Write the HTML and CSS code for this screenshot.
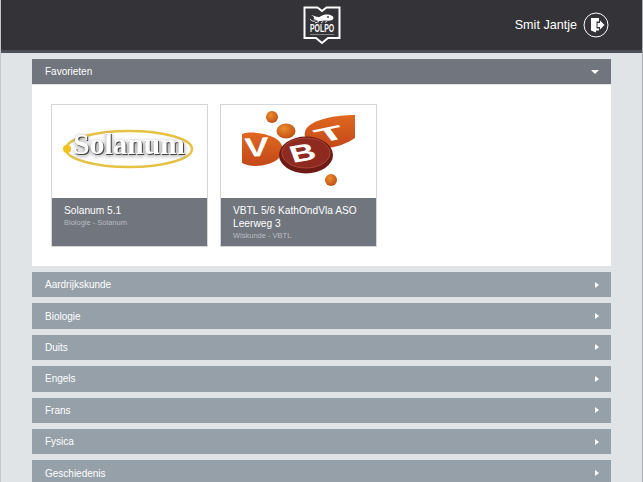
FILE: index.html
```html
<!DOCTYPE html>
<html lang="en">
<head>
    <meta charset="UTF-8">
    <meta name="viewport" content="width=device-width, initial-scale=1.0">
    <title>Polpo</title>
    <link rel="stylesheet" href="styles.css">
</head>
<body>
    <header class="topbar">
        <svg class="logo" width="38" height="38" viewBox="0 0 38 38">
            <path d="M1.5 1.5 H14.5 L19 5 L23.5 1.5 H36.5 V32 H25 L19 37 L13 32 H1.5 Z" fill="none" stroke="#fff" stroke-width="2"/>
            <path d="M8 9 C11 9.5 13 11 15.5 11 C18 11 19 8.5 23.5 8.5 C28 8.5 31 10.5 30.5 12.5 C30 14.5 26 15 23 14.5 C20 14 18.5 15.5 15.5 15 C13.5 14.7 12.5 13.5 10.5 13 C12 12 11 10.5 8 9 Z" fill="#fff"/>
            <path d="M7 13 C8.5 15.5 11 15.5 12.5 14.8 M12 17 L16 15.5 M18 17 L20.5 15 M22 16.5 L24 15" fill="none" stroke="#fff" stroke-width="0.9"/>
            <circle cx="25" cy="11" r="0.9" fill="#333338"/>
            <text class="logo-text" transform="translate(7 26) scale(0.69 1)">POLPO</text>
            <rect x="7" y="28" width="24" height="0.8" fill="#999"/>
        </svg>
        <div class="user">
            <span class="user-name">Smit Jantje</span>
            <svg class="logout" width="26" height="26" viewBox="0 0 26 26">
                <circle cx="13" cy="13" r="12" fill="none" stroke="#fff" stroke-width="1"/>
                <path d="M8 6 H16 V9.5 H13.5 V16.5 H16 V18.5 H13 V20.5 L8 18.5 Z" fill="#fff"/>
                <path d="M14.5 11 H17 V8.5 L21.5 13 L17 17.5 V15 H14.5 Z" fill="#fff"/>
            </svg>
        </div>
    </header>
    <div class="topbar-edge"></div>

    <main class="content">
        <section class="favorites">
            <div class="fav-head">
                <span>Favorieten</span>
                <span class="arrow-down"></span>
            </div>
            <div class="fav-body">
                <article class="card">
                    <div class="card-img">
                        <svg width="155" height="93" viewBox="0 0 155 93">
                            <ellipse cx="77" cy="44" rx="63" ry="18" fill="none" stroke="#e6c244" stroke-width="2.5"/>
                            <circle cx="15" cy="44" r="4" fill="#f2c21e"/>
                            <text class="solanum-text" x="77" y="49" text-anchor="middle">Solanum</text>
                        </svg>
                    </div>
                    <div class="card-info">
                        <div class="card-title">Solanum 5.1</div>
                        <div class="card-sub">Biologie - Solanum</div>
                    </div>
                </article>
                <article class="card">
                    <div class="card-img">
                        <svg width="155" height="93" viewBox="0 0 155 93">
                            <defs>
                                <linearGradient id="orange" x1="0" y1="0" x2="0" y2="1">
                                    <stop offset="0" stop-color="#e0681f"/>
                                    <stop offset="1" stop-color="#c2481a"/>
                                </linearGradient>
                                <radialGradient id="ball" cx="0.4" cy="0.35" r="0.7">
                                    <stop offset="0" stop-color="#ee8c2c"/>
                                    <stop offset="1" stop-color="#bb4d16"/>
                                </radialGradient>
                            </defs>
                            <path d="M21 29 C30 26 45 28 54 33 C63 38 64 48 57 54 C50 60 32 64 21 58 Z" fill="url(#orange)"/>
                            <path d="M134 10 C115 10 92 14 85 24 C80 34 90 43 102 43 C115 43 127 38 134 33 Z" fill="url(#orange)"/>
                            <circle cx="51" cy="12" r="6" fill="url(#ball)"/>
                            <ellipse cx="65" cy="26" rx="9.5" ry="7.5" fill="url(#ball)"/>
                            <ellipse cx="85" cy="50" rx="27" ry="18.5" fill="#6f1a14"/>
                            <ellipse cx="85" cy="48" rx="24" ry="15" fill="#8f2a20" stroke="#a9493c" stroke-width="1"/>
                            <circle cx="110" cy="75" r="6" fill="url(#ball)"/>
                            <text class="vbt-text" transform="translate(24 52) rotate(-3) scale(1.35 1)">V</text>
                            <text class="vbt-text" transform="translate(100 38) rotate(-12) skewX(25) scale(1.7 0.75)">T</text>
                            <text class="vbt-text" transform="translate(72 58) rotate(-10) skewX(10) scale(1.3 0.9)">B</text>
                        </svg>
                    </div>
                    <div class="card-info">
                        <div class="card-title">VBTL 5/6 KathOndVla ASO Leerweg 3</div>
                        <div class="card-sub">Wiskunde - VBTL</div>
                    </div>
                </article>
            </div>
        </section>

        <div class="subjects">
            <div class="subject"><span>Aardrijkskunde</span><span class="arrow-right"></span></div>
            <div class="subject"><span>Biologie</span><span class="arrow-right"></span></div>
            <div class="subject"><span>Duits</span><span class="arrow-right"></span></div>
            <div class="subject"><span>Engels</span><span class="arrow-right"></span></div>
            <div class="subject"><span>Frans</span><span class="arrow-right"></span></div>
            <div class="subject"><span>Fysica</span><span class="arrow-right"></span></div>
            <div class="subject"><span>Geschiedenis</span><span class="arrow-right"></span></div>
        </div>
    </main>
</body>
</html>
```

FILE: styles.css
```css
body {
    margin: 0;
    height: 482px;
    overflow: hidden;
    background-color: #E1E4E7;
    border-left: 1px solid #C4C8CC;
    border-right: 1px solid #A9ADB2;
    box-sizing: border-box;
    font-family: "Liberation Sans", Arial, sans-serif;
    color: #FFFFFF;
}

.topbar {
    height: 50px;
    margin: 0 -1px;
    background-color: #333338;
    display: flex;
    justify-content: center;
    align-items: flex-start;
    position: relative;
}

.logo {
    margin-top: 6px;
    overflow: visible;
}

.logo-text {
    font-family: "Liberation Sans", Arial, sans-serif;
    font-size: 10px;
    font-weight: 700;
    fill: #FFFFFF;
}

.user {
    position: absolute;
    right: 34px;
    top: 12px;
    display: flex;
    align-items: center;
    gap: 6px;
}

.user-name {
    font-size: 12.6px;
}

.logout {
    display: block;
}

.topbar-edge {
    height: 3px;
    margin: 0 -1px;
    background-color: #4C5058;
}

.content {
    width: 579px;
    margin-left: 31px;
    padding-top: 6px;
}

.fav-head {
    height: 25px;
    background-color: #70757E;
    display: flex;
    justify-content: space-between;
    align-items: center;
    padding: 0 12px 0 13px;
    font-size: 10px;
}

.arrow-down {
    width: 0;
    height: 0;
    border-left: 4px solid transparent;
    border-right: 4px solid transparent;
    border-top: 4px solid #FFFFFF;
}

.fav-body {
    background-color: #FFFFFF;
    height: 181px;
    margin-top: 1px;
    padding: 19px 19px 0;
    display: flex;
    gap: 12px;
    box-sizing: border-box;
}

.card {
    width: 157px;
    height: 143px;
    box-sizing: border-box;
    border: 1px solid #D4D6D9;
    display: flex;
    flex-direction: column;
}

.card-img {
    height: 93px;
    background-color: #FFFFFF;
}

.card-img svg {
    display: block;
}

.solanum-text {
    font-family: "Liberation Serif", serif;
    font-size: 29.5px;
    font-weight: 700;
    fill: #FFFFFF;
    filter: drop-shadow(1.5px 1.5px 0.5px #444444) drop-shadow(0 1px 2px #999999);
}

.vbt-text {
    font-family: "Liberation Sans", Arial, sans-serif;
    font-size: 27px;
    font-weight: 700;
    fill: #FFFFFF;
}

.card-info {
    flex: 1;
    background-color: #70757E;
    padding: 6px 12px 0;
}

.card-title {
    font-size: 10.2px;
    line-height: 13px;
}

.card-sub {
    font-size: 7.5px;
    line-height: 10px;
    margin-top: 1px;
    color: #B9BCC2;
}

.subjects {
    margin-top: 6px;
    display: flex;
    flex-direction: column;
    gap: 6px;
}

.subject {
    height: 25.4px;
    flex-shrink: 0;
    background-color: #95A0A9;
    display: flex;
    justify-content: space-between;
    align-items: center;
    padding: 0 12px 0 13px;
    font-size: 10px;
}

.arrow-right {
    width: 0;
    height: 0;
    border-top: 3px solid transparent;
    border-bottom: 3px solid transparent;
    border-left: 4px solid #FFFFFF;
}
```
